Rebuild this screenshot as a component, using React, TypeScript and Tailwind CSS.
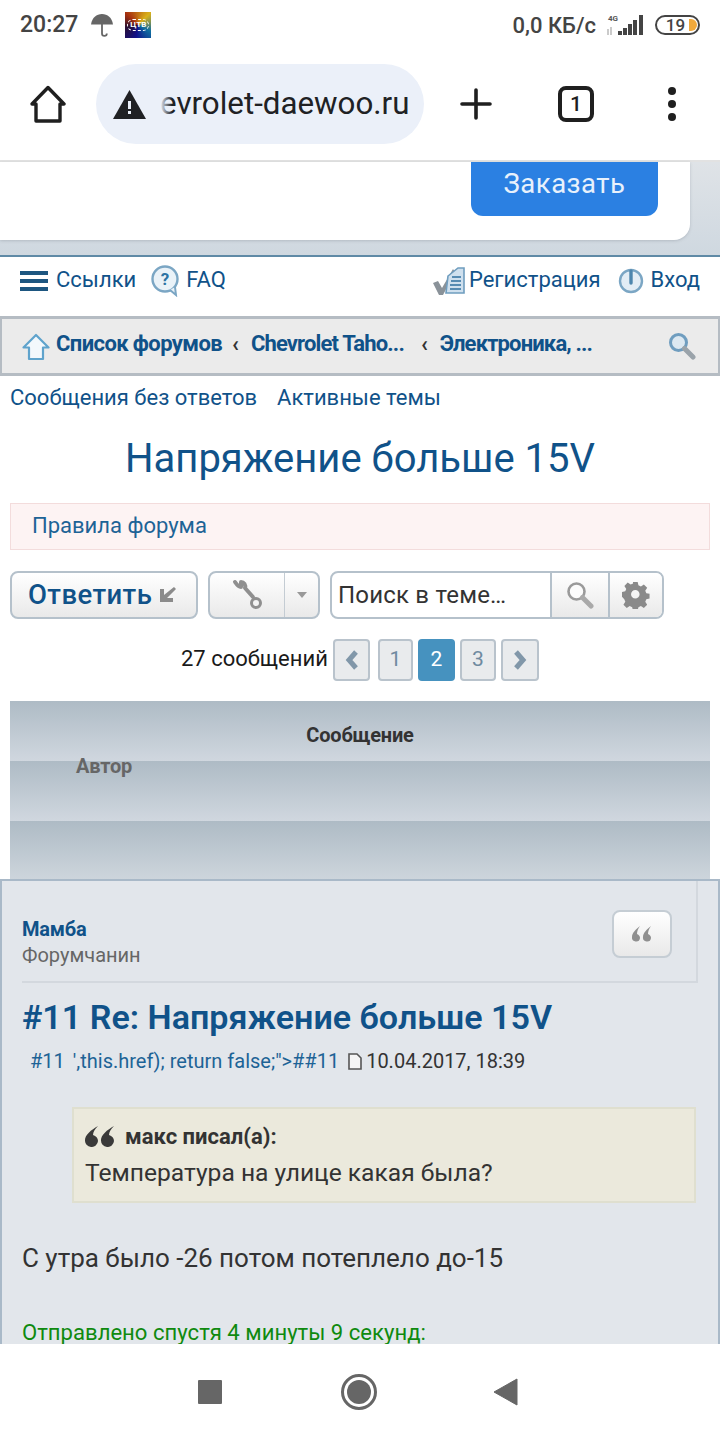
import React from 'react';

const blue = 'text-[#105289]';

const StatusBar = () => (
  <div className="h-[50px] flex items-center justify-between pl-[20px] pr-[20px] text-[#444444] bg-white">
    <div className="flex items-center">
      <span className="text-[23px] font-medium">20:27</span>
      <svg className="ml-[13px]" width="22" height="24" viewBox="0 0 22 24" fill="none">
        <path d="M0 11.5C1 4.500 5.500 1 11 1s10 3.500 11 10.500z" fill="#666666" />
        <path d="M11 10v10.500a2.400 2.400 0 0 0 4.800 0" stroke="#666666" strokeWidth="1.8" />
      </svg>
      <div className="ml-[12px] w-[26px] h-[26px] bg-[conic-gradient(from_315deg,#a8320f,#d9b01a_25%,#0f6fa0_45%,#10108a_65%,#2a1030_85%,#a8320f)] flex items-center justify-center">
        <span className="text-[8px] leading-[10px] font-bold text-white border border-dashed border-white rounded-full px-[2px]">ЦТВ</span>
      </div>
    </div>
    <div className="flex items-center">
      <span className="text-[22px] font-medium">0,0 КБ/с</span>
      <svg className="ml-[10px]" width="38" height="22" viewBox="0 0 38 22">
        <text x="2" y="7" fontSize="8" fontWeight="700" fill="#555555" fontFamily="Roboto">4G</text>
        <path d="M2 15v6M5 13v8" stroke="#bbbbbb" strokeWidth="1.5" />
        <rect x="12" y="17" width="4" height="4" fill="#444444" />
        <rect x="17" y="14" width="4" height="7" fill="#444444" />
        <rect x="22" y="10" width="4" height="11" fill="#444444" />
        <rect x="27" y="6" width="4" height="15" fill="#444444" />
        <rect x="33" y="1" width="4" height="20" fill="#444444" />
      </svg>
      <div className="ml-[11px] relative w-[45px] h-[20px] border-2 border-[#444444] rounded-full flex items-center justify-center overflow-hidden">
        <span className="text-[17px] leading-none font-medium pr-[4px]">19</span>
        <div className="absolute right-[1px] top-[2px] w-[8px] h-[12px] bg-[#f0a93c] rounded-r-full" />
      </div>
    </div>
  </div>
);

const BrowserBar = () => (
  <div className="h-[112px] bg-white border-b-2 border-[#e2e2e2] flex items-center pl-[30px] pb-[2px]">
    <svg width="36" height="38" viewBox="0 0 36 38" fill="none" stroke="#1f1f1f" strokeWidth="3.4" strokeLinejoin="round" strokeLinecap="round">
      <path d="M2 19 18 2.500 34 19h-4v17H6V19z" />
    </svg>
    <div className="ml-[30px] w-[328px] h-[80px] rounded-full bg-[#ebf0f9] flex items-center pl-[17px] pr-[16px]">
      <svg className="shrink-0" width="33" height="29" viewBox="0 0 33 29">
        <path d="M16.500 0 33 29H0z" fill="#202124" />
        <rect x="15" y="11" width="3" height="8" fill="#ebf0f9" />
        <rect x="15" y="21" width="3" height="3" fill="#ebf0f9" />
      </svg>
      <div className="ml-[14px] flex-1 flex justify-end relative pr-[2px]">
        <span className="text-[31.300px] leading-[40px] text-[#202124] whitespace-nowrap">evrolet-daewoo.ru</span>
        <div className="absolute left-0 top-0 h-full w-[12px] bg-gradient-to-r from-[#ebf0f9] to-transparent" />
      </div>
    </div>
    <svg className="ml-[36px]" width="32" height="32" viewBox="0 0 32 32" stroke="#1f1f1f" strokeWidth="3.6" strokeLinecap="round">
      <path d="M16 2v28M2 16h28" />
    </svg>
    <div className="ml-[66px] w-[36px] h-[36px] border-[4px] border-[#1f1f1f] rounded-[8px] flex items-center justify-center">
      <span className="text-[21px] leading-none font-medium text-[#1f1f1f]">1</span>
    </div>
    <div className="ml-[74px] flex flex-col gap-[5px]">
      <div className="w-[8px] h-[8px] rounded-full bg-[#1f1f1f]" />
      <div className="w-[8px] h-[8px] rounded-full bg-[#1f1f1f]" />
      <div className="w-[8px] h-[8px] rounded-full bg-[#1f1f1f]" />
    </div>
  </div>
);

const AdStrip = () => (
  <div className="h-[95px] bg-[linear-gradient(to_bottom,#dfe3e7,#cfd8e0)] border-b-2 border-[#5f8aa6]">
    <div className="w-[690px] h-[78px] bg-white rounded-br-[16px] flex justify-end pr-[32px] shadow-[0_1px_3px_rgba(120,130,140,0.35)]">
      <div className="w-[187px] h-[54px] bg-[#2b80e2] rounded-b-[12px] flex items-center justify-center pb-[10px]">
        <span className="text-[27.500px] text-[#e8f1fc] tracking-[0.5px]">Заказать</span>
      </div>
    </div>
  </div>
);

const NavRow = () => (
  <div className={`h-[59px] bg-white flex items-center justify-between pl-[20px] pr-[20px] text-[22px] ${blue} pb-[15px]`}>
    <div className="flex items-center">
      <div className="w-[28px] flex flex-col gap-[4px] mt-[3px]">
        <div className="h-[4px] bg-[#1d5680]" />
        <div className="h-[4px] bg-[#1d5680]" />
        <div className="h-[4px] bg-[#1d5680]" />
      </div>
      <span className="ml-[8px]">Ссылки</span>
      <svg className="ml-[14px] mt-[3px]" width="32" height="32" viewBox="0 0 32 32" fill="none">
        <circle cx="15" cy="14" r="12.500" fill="#eaf2f8" stroke="#7ba6c4" strokeWidth="2.4" />
        <path d="M20 25l6 5 -1-8" fill="#eaf2f8" stroke="#7ba6c4" strokeWidth="2" />
        <text x="15" y="20" fontSize="17" fontWeight="700" fill="#2d73a3" textAnchor="middle" fontFamily="Roboto">?</text>
      </svg>
      <span className="ml-[4px]">FAQ</span>
    </div>
    <div className="flex items-center">
      <svg className="mt-[3px]" width="34" height="30" viewBox="0 0 34 30" fill="none">
        <path d="M1 17l5-2 4 7L21 3l2 3-12 23H7z" fill="#8a9299" />
        <path d="M16 10l10-8h6v25H14z" fill="#cfe0ee" stroke="#6f9dbf" strokeWidth="1.6" />
        <path d="M20 11h9M19 15h10M18 19h11M18 23h11" stroke="#2f6f9f" strokeWidth="1.6" />
      </svg>
      <span className="ml-[3px]">Регистрация</span>
      <svg className="ml-[17px] mt-[3px]" width="26" height="26" viewBox="0 0 26 26" fill="none">
        <circle cx="13" cy="13" r="11" fill="#e3edf5" stroke="#7ba6c4" strokeWidth="2.4" />
        <path d="M13 3v12" stroke="#4e86ad" strokeWidth="3.4" strokeLinecap="round" />
      </svg>
      <span className="ml-[7px]">Вход</span>
    </div>
  </div>
);

const Breadcrumbs = () => (
  <div className="h-[60px] bg-[#ebebeb] border-y-[3px] border-x-[2px] border-[#b5bcc3] flex items-center pl-[20px] pr-[22px]">
    <svg className="mt-[2px]" width="28" height="28" viewBox="0 0 28 28" fill="none">
      <path d="M14 2 26.500 14.500H21V26H7V14.500H1.500z" fill="#f3f8fc" stroke="#5fa3cc" strokeWidth="2.2" strokeLinejoin="round" />
    </svg>
    <div className="flex items-center pb-[5px]">
      <span className={`ml-[6px] text-[22px] font-bold tracking-[-0.6px] ${blue} whitespace-nowrap`}>Список форумов</span>
      <span className="ml-[10px] text-[22px] font-bold text-[#333333]">‹</span>
      <span className={`ml-[12px] text-[22px] font-bold tracking-[-0.85px] ${blue} whitespace-nowrap`}>Chevrolet Taho...</span>
      <span className="ml-[17px] text-[22px] font-bold text-[#333333]">‹</span>
      <span className={`ml-[12px] text-[22px] font-bold tracking-[-0.85px] ${blue} whitespace-nowrap`}>Электроника, ...</span>
    </div>
    <svg className="ml-auto" width="28" height="28" viewBox="0 0 28 28" fill="none">
      <circle cx="10.500" cy="10.500" r="8" fill="#dce8f1" stroke="#6f9dbf" strokeWidth="3" />
      <path d="M16.500 16.500 25 25" stroke="#9aa3aa" strokeWidth="5" strokeLinecap="round" />
    </svg>
  </div>
);

const Toolbar = () => (
  <div className="flex items-center h-[48px] pl-[10px]">
    <div className="w-[188px] h-[48px] rounded-[8px] border-2 border-[#b5c1cb] bg-gradient-to-b from-white to-[#e9e9e9] flex items-center pl-[16px]">
      <span className={`text-[27.500px] font-medium tracking-[0.4px] ${blue}`}>Ответить</span>
      <svg className="ml-[6px]" width="18" height="18" viewBox="0 0 18 18" fill="#8b8b8b">
        <path d="M16 1l2 2-9 9h6v4H2V3h4v6z" />
      </svg>
    </div>
    <div className="ml-[10px] w-[112px] h-[48px] rounded-[8px] border-2 border-[#b5c1cb] bg-gradient-to-b from-white to-[#e9e9e9] flex items-stretch">
      <div className="flex-1 border-r border-[#c4ccd3] flex items-center justify-center">
        <svg width="32" height="32" viewBox="0 0 32 32" fill="none">
          <path d="M4 3c2 3 4 5 6 5l0-5c3 0 5 3 4 6l8 9" stroke="#8f8f8f" strokeWidth="4" strokeLinecap="round" strokeLinejoin="round" />
          <circle cx="25" cy="24" r="4.500" fill="#f3f3f3" stroke="#8f8f8f" strokeWidth="3" />
        </svg>
      </div>
      <div className="w-[33px] flex items-center justify-center">
        <div className="w-0 h-0 border-x-[5px] border-x-transparent border-t-[6px] border-t-[#999999]" />
      </div>
    </div>
    <div className="ml-[10px] w-[334px] h-[48px] rounded-[8px] border-2 border-[#b5c1cb] bg-white flex items-stretch overflow-hidden">
      <span className="flex-1 pl-[6px] text-[24px] leading-[44px] tracking-[0.2px] text-[#333333] whitespace-nowrap">Поиск в теме…</span>
      <div className="w-[58px] border-l-2 border-[#b5c1cb] bg-gradient-to-b from-white to-[#e9e9e9] flex items-center justify-center">
        <svg width="28" height="28" viewBox="0 0 28 28" fill="none">
          <circle cx="10.500" cy="10.500" r="8" fill="#fbfbfb" stroke="#9a9a9a" strokeWidth="2.6" />
          <path d="M16.500 16.500 25 25" stroke="#a9a9a9" strokeWidth="5" strokeLinecap="round" />
        </svg>
      </div>
      <div className="w-[54px] border-l-2 border-[#b5c1cb] bg-gradient-to-b from-white to-[#e9e9e9] flex items-center justify-center">
        <svg width="28" height="28" viewBox="0 0 28 28" fill="#8a8a8a">
          <path fillRule="evenodd" d="M11.500 1h5l.8 3.600 2.600 1.100 3.100-2 3.500 3.500-2 3.100 1.100 2.600 3.400.6v5l-3.400.8-1.100 2.600 2 3-3.500 3.500-3.100-2-2.600 1.100-.8 3.400h-5l-.8-3.400-2.600-1.100-3.100 2-3.500-3.500 2-3-1.100-2.600L0 16.500v-5l3.400-.6 1.100-2.600-2-3.100L6 1.700l3.100 2 2.600-1.100zM14 9.500a4.500 4.500 0 1 0 0 9 4.500 4.500 0 0 0 0-9z" transform="scale(.95) translate(0 0)" />
        </svg>
      </div>
    </div>
  </div>
);

const pageBtn = 'h-[42px] bg-[#e9ebed] border-2 border-[#b9c3cc] rounded-[4px] flex items-center justify-center';

const Pagination = () => (
  <div className="flex items-center h-[42px] mt-[20px] pl-[181px]">
    <span className="w-[146px] text-[22px] leading-[26px] pb-[2px] text-[#1a1a1a] whitespace-nowrap">27 сообщений</span>
    <div className={`ml-[6px] w-[37px] ${pageBtn}`}>
      <svg width="16" height="22" viewBox="0 0 16 22" fill="none">
        <path d="M12 3 5 11l7 8" stroke="#8197a9" strokeWidth="5" />
      </svg>
    </div>
    <div className={`ml-[8px] w-[35px] ${pageBtn} text-[21px] text-[#6f8aa0]`}>1</div>
    <div className="ml-[5px] w-[37px] h-[42px] bg-[#4692bf] rounded-[4px] flex items-center justify-center text-[21px] text-white">2</div>
    <div className={`ml-[5px] w-[36px] ${pageBtn} text-[21px] text-[#6f8aa0]`}>3</div>
    <div className={`ml-[5px] w-[38px] ${pageBtn}`}>
      <svg width="16" height="22" viewBox="0 0 16 22" fill="none">
        <path d="M4 3l7 8-7 8" stroke="#8197a9" strokeWidth="5" />
      </svg>
    </div>
  </div>
);

const headRow = 'h-[60px] bg-gradient-to-b from-[#aebbc5] to-[#d0d7df]';

const TableHead = () => (
  <div className="mt-[20px] mx-[10px]">
    <div className={`${headRow} flex items-center justify-center pt-[8px]`}>
      <span className="text-[20px] font-bold text-[#333333] tracking-[-0.2px]">Сообщение</span>
    </div>
    <div className={`${headRow} flex`}>
      <div className="-mt-[7px] h-[24px] pl-[66px] text-[20px] leading-[24px] font-bold text-[#666666] tracking-[-0.2px]">Автор</div>
    </div>
    <div className="h-[58px] bg-gradient-to-b from-[#aebbc5] to-[#cdd5dc]" />
  </div>
);

const Post = () => (
  <div className="h-[465px] bg-[#e2e6eb] border-t-2 border-x-2 border-[#a9b9c8] pl-[20px] pr-[20px] overflow-hidden">
    <div className="h-[102px] flex items-end pt-[10px] border-b-2 border-r-2 border-[#d3d8de]">
      <div className="flex-1 pb-[14px]">
        <div className={`text-[20px] leading-[27px] font-bold tracking-[-0.2px] ${blue}`}>Мамба</div>
        <div className="text-[20px] leading-[24px] text-[#666666]">Форумчанин</div>
      </div>
      <div className="mr-[24px] mb-[23px] w-[60px] h-[48px] rounded-[8px] border-2 border-[#c5cdd4] bg-gradient-to-b from-white to-[#e9e9e9] flex items-center justify-center">
        <svg width="20" height="16" viewBox="0 0 20 16" fill="#8f8f8f">
          <path d="M8 0C4 3 0 7 0 11a4 4 0 0 0 8 1c0-2-1-3-3-4 0-3 1-5 3-8zM19 0c-4 3-8 7-8 11a4 4 0 0 0 8 1c0-2-1-3-3-4 0-3 1-5 3-8z" />
        </svg>
      </div>
    </div>
    <div className={`mt-[12px] text-[34.100px] leading-[44px] font-semibold ${blue} whitespace-nowrap`}>#11 Re: Напряжение больше 15V</div>
    <div className="mt-[8px] flex items-center text-[20px] leading-[28px] pl-[8px] whitespace-nowrap">
      <span className="text-[#1d6396]">#11</span>
      <span className="ml-[8px] text-[#1d6396]">',this.href); return false;"&gt;##11</span>
      <svg className="ml-[9px]" width="14" height="17" viewBox="0 0 14 17" fill="#f5f5f5" stroke="#555555" strokeWidth="1.6">
        <path d="M1 1h8l4 4v11H1z" />
      </svg>
      <span className="ml-[4px] text-[#333333]">10.04.2017, 18:39</span>
    </div>
    <div className="mt-[32px] ml-[50px] mr-[2px] h-[96px] bg-[#ebe9dc] border-2 border-[#dfdfcf] pl-[11px] pt-[12px]">
      <div className="flex items-center h-[30px]">
        <svg width="29" height="21" viewBox="0 0 29 21" fill="#3a3a3a">
          <path d="M13 0C6 4 0 9 0 14a6.500 6.500 0 0 0 13 1c0-3-2-5-5-6 0-3 2-6 5-9zM29 0c-7 4-13 9-13 14a6.500 6.500 0 0 0 13 1c0-3-2-5-5-6 0-3 2-6 5-9z" />
        </svg>
        <span className="ml-[11px] text-[22px] font-bold text-[#333333]">макс писал(а):</span>
      </div>
      <div className="mt-[5px] text-[24.600px] leading-[34px] text-[#333333] whitespace-nowrap">Температура на улице какая была?</div>
    </div>
    <div className="mt-[37px] text-[26px] leading-[36px] text-[#333333] whitespace-nowrap">С утра было -26 потом потеплело до-15</div>
    <div className="mt-[42px] text-[22.100px] leading-[28px] text-[#0f8a0f] whitespace-nowrap">Отправлено спустя 4 минуты 9 секунд:</div>
  </div>
);

const SystemNav = () => (
  <div className="h-[96px] bg-white flex items-center justify-center pr-[4px]">
    <div className="w-[24px] h-[24px] bg-[#666666] rounded-[1px]" />
    <div className="ml-[119px] w-[36px] h-[36px] rounded-full border-[3px] border-[#666666] flex items-center justify-center">
      <div className="w-[24px] h-[24px] rounded-full bg-[#666666]" />
    </div>
    <svg className="ml-[116px]" width="25" height="28" viewBox="0 0 25 28" fill="#666666">
      <path d="M24 1v26L1 14z" stroke="#666666" strokeLinejoin="round" />
    </svg>
  </div>
);

const App: React.FC = () => {
  return (
    <div className="w-[720px] h-[1440px] overflow-hidden bg-white font-['Roboto',sans-serif] flex flex-col">
      <StatusBar />
      <BrowserBar />
      <AdStrip />
      <NavRow />
      <Breadcrumbs />
      <div className={`h-[44px] pl-[10px] flex items-center text-[22px] ${blue} pb-[2px]`}>
        <span>Сообщения без ответов</span>
        <span className="ml-[20px]">Активные темы</span>
      </div>
      <h2 className={`mt-[9px] text-center text-[40px] leading-[60px] font-normal ${blue}`}>Напряжение больше 15V</h2>
      <div className="mt-[14px] mx-[10px] h-[47px] bg-[#fdf3f3] border border-[#f3dcdc] flex items-center pl-[21px] pb-[2px] text-[22px] text-[#1d6396]">
        Правила форума
      </div>
      <div className="mt-[21px]">
        <Toolbar />
      </div>
      <Pagination />
      <TableHead />
      <Post />
      <SystemNav />
    </div>
  );
};

export default App;
